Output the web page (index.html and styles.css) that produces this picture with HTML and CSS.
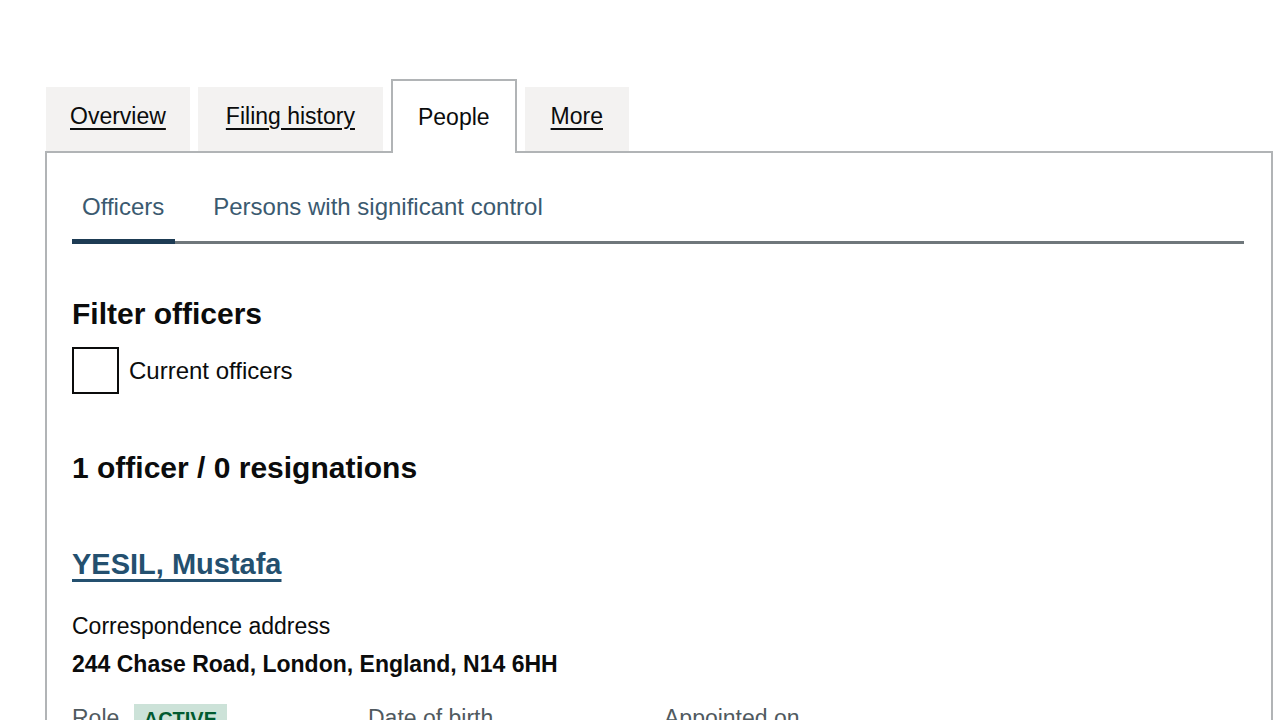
FILE: index.html
```html
<!DOCTYPE html>
<html lang="en">
<head>
<meta charset="UTF-8">
<meta name="viewport" content="width=device-width, initial-scale=1.0">
<title>People - Companies House</title>
<link rel="stylesheet" href="styles.css">
</head>
<body>
<div id="page">
  <ul class="tabs">
    <li class="tab"><a href="#">Overview</a></li>
    <li class="tab tab-filing"><a href="#">Filing history</a></li>
    <li class="tab tab-active"><span>People</span></li>
    <li class="tab tab-more"><a href="#">More</a></li>
  </ul>

  <div class="panel">
    <ul class="subnav">
      <li><a class="subnav-active" href="#">Officers</a></li>
      <li><a href="#">Persons with significant control</a></li>
    </ul>

    <h2 class="heading filter-heading">Filter officers</h2>
    <div class="checkbox-row">
      <input type="checkbox" id="current" class="checkbox">
      <label for="current">Current officers</label>
    </div>

    <h2 class="heading count-heading">1 officer / 0 resignations</h2>

    <div class="officer">
      <h3 class="officer-name"><a href="#">YESIL, Mustafa</a></h3>
      <div class="label">Correspondence address</div>
      <div class="address">244 Chase Road, London, England, N14 6HH</div>
      <div class="officer-details">
        <div class="detail">
          <div class="detail-label">Role <span class="tag">Active</span></div>
          <div class="detail-value">Director</div>
        </div>
        <div class="detail">
          <div class="detail-label">Date of birth</div>
          <div class="detail-value">November 1985</div>
        </div>
        <div class="detail">
          <div class="detail-label">Appointed on</div>
          <div class="detail-value">3 May 2019</div>
        </div>
      </div>
    </div>
  </div>
</div>
</body>
</html>
```

FILE: styles.css
```css
body {
  margin: 0;
  font-family: "Liberation Sans", Arial, sans-serif;
  color: #0b0c0c;
  background-color: #fff;
}
#page {
  padding: 79px 7px 0 45px;
}
.tabs {
  display: flex;
  align-items: flex-end;
  gap: 8px;
  list-style: none;
  margin: 0;
  padding: 0 0 0 1px;
}
.tab {
  display: flex;
  align-items: center;
  justify-content: center;
  box-sizing: border-box;
  height: 64px;
  padding: 0 24px 6px;
  background-color: #f3f2f1;
  font-size: 23px;
}
.tab-filing {
  padding: 0 28px 6px;
}
.tab-more {
  padding: 0 26px 6px;
}
.tab a {
  color: #0b0c0c;
  text-decoration: underline;
  text-decoration-thickness: 2px;
  text-underline-offset: 4px;
}
.tab-active {
  position: relative;
  z-index: 1;
  height: 74px;
  margin-bottom: -2px;
  padding: 0 25px 0;
  background-color: #fff;
  border: 2px solid #b1b4b6;
  border-bottom: none;
}
.panel {
  border: 2px solid #b1b4b6;
  padding: 0 27px 40px 25px;
  min-height: 600px;
}
.subnav {
  display: flex;
  gap: 28px;
  list-style: none;
  margin: 0;
  padding: 39px 0 0;
  border-bottom: 3px solid #6f777b;
}
.subnav a {
  display: block;
  padding: 0 11px 22px 10px;
  margin-bottom: -3px;
  font-size: 24px;
  line-height: 30px;
  color: #3b5a70;
  text-decoration: none;
}
.subnav a.subnav-active {
  padding-bottom: 17px;
  border-bottom: 5px solid #1d3b54;
}
.heading {
  margin: 0;
  font-size: 30px;
  line-height: 36px;
  font-weight: bold;
}
.filter-heading {
  margin-top: 52px;
}
.checkbox-row {
  display: flex;
  align-items: center;
  gap: 10px;
  margin-top: 15px;
}
.checkbox {
  appearance: none;
  box-sizing: border-box;
  width: 47px;
  height: 47px;
  margin: 0;
  border: 2px solid #0b0c0c;
  background-color: #fff;
}
.checkbox-row label {
  font-size: 24px;
  line-height: 30px;
}
.count-heading {
  margin-top: 56px;
}
.officer-name {
  margin: 60px 0 0;
  font-size: 29px;
  line-height: 36px;
  font-weight: bold;
}
.officer-name a {
  color: #24506f;
  text-decoration: underline;
  text-decoration-thickness: 3px;
  text-underline-offset: 5px;
}
.label {
  margin-top: 29px;
  font-size: 23px;
  line-height: 30px;
}
.address {
  margin-top: 8px;
  font-size: 23px;
  line-height: 30px;
  font-weight: bold;
}
.officer-details {
  display: flex;
  margin-top: 24px;
  font-size: 23px;
  line-height: 30px;
}
.detail {
  width: 296px;
}
.detail-label {
  color: #505a5f;
}
.detail-value {
  font-weight: bold;
}
.tag {
  display: inline-block;
  margin-left: 8px;
  padding: 0 10px;
  background-color: #cce2d8;
  color: #005a30;
  font-size: 20px;
  font-weight: bold;
  text-transform: uppercase;
}
```
